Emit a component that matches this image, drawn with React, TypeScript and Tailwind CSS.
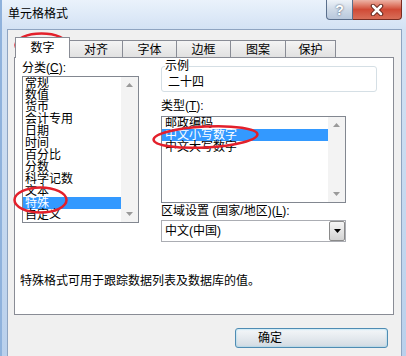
import React from 'react';

const categories = ['常规', '数值', '货币', '会计专用', '日期', '时间', '百分比', '分数', '科学记数', '文本', '特殊', '自定义'];
const types = ['邮政编码', '中文小写数字', '中文大写数字'];

const tabs = [
  { label: '对齐', w: 'w-[54px]' },
  { label: '字体', w: 'w-[55px]' },
  { label: '边框', w: 'w-[55px]' },
  { label: '图案', w: 'w-[56px]' },
  { label: '保护', w: 'w-[51px]' },
];

function ScrollTrack() {
  return (
    <div className="flex w-[17px] flex-col items-center justify-between bg-[#f3f3f3] py-[6px]">
      <svg width="7" height="4" viewBox="0 0 7 4">
        <path d="M0 4 L3.5 0 L7 4 Z" fill="#9a9a9a" />
      </svg>
      <svg width="7" height="4" viewBox="0 0 7 4">
        <path d="M0 0 L3.5 4 L7 0 Z" fill="#9a9a9a" />
      </svg>
    </div>
  );
}

function ListBox({
  items,
  selected,
  className,
  pad,
}: {
  items: string[];
  selected: string;
  className: string;
  pad: string;
}) {
  return (
    <div className={`flex border border-[#828790] bg-white ${className}`}>
      <div className="min-w-0 flex-1 overflow-hidden">
        {items.map((it) => (
          <div
            key={it}
            className={`h-[12px] whitespace-nowrap text-[12px] leading-[12px] ${pad} ${
              it === selected ? 'bg-[#3399ff] text-white' : 'text-black'
            }`}
          >
            {it}
          </div>
        ))}
      </div>
      <ScrollTrack />
    </div>
  );
}

export default function App() {
  return (
    <div className="relative h-[356px] w-[406px] overflow-hidden border-l-2 border-[#8fb2dc] bg-gradient-to-b from-[#d6e4f4] to-[#b9d0ec] font-['Liberation_Sans','Noto_Sans_CJK_SC',sans-serif] text-black">
      {/* title bar */}
      <div className="-ml-[2px] flex h-[29px] items-start bg-gradient-to-b from-[#eaf2fb] to-[#d3e2f4]">
        <div className="pl-[8px] pt-[8px] text-[12px] leading-[12px]">单元格格式</div>
        <div className="ml-auto mr-[4px] flex">
          <div className="flex h-[20px] w-[27px] items-center justify-center rounded-bl-[4px] border border-t-0 border-[#5a6f8c] bg-gradient-to-b from-[#eef3f9] via-[#cfdae7] to-[#b8c8dc] text-[14px] font-bold leading-[14px] text-white [text-shadow:0_0_2px_#2c3e57]">
            ?
          </div>
          <div className="flex h-[20px] w-[49px] items-center justify-center rounded-br-[4px] border border-l-0 border-t-0 border-[#7a2d22] bg-gradient-to-b from-[#ecb3a6] via-[#d04a36] to-[#d86e58]">
            <svg width="14" height="12" viewBox="0 0 14 12">
              <path d="M3 2 L11 10 M11 2 L3 10" stroke="#5a1f16" strokeWidth="4.5" strokeLinecap="round" />
              <path d="M3 2 L11 10 M11 2 L3 10" stroke="#ffffff" strokeWidth="2.6" strokeLinecap="round" />
            </svg>
          </div>
        </div>
      </div>

      {/* client area */}
      <div className="ml-[5px] h-[340px] w-[395px] border border-[#8ea4c1] bg-[#f0f0f0]">
        {/* tab strip */}
        <div className="flex h-[27px] items-end pl-[7px] pt-[7px]">
          <div className="relative z-10 -mb-px flex h-[21px] w-[55px] justify-center border border-b-0 border-[#898c95] bg-white pt-[4px] text-[12px] leading-[12px]">
            数字
          </div>
          {tabs.map((t) => (
            <div
              key={t.label}
              className={`-ml-px flex h-[17px] justify-center border border-b-0 border-[#898c95] bg-gradient-to-b from-[#f4f4f4] to-[#e1e1e1] pt-[3px] text-[12px] leading-[12px] ${t.w}`}
            >
              {t.label}
            </div>
          ))}
        </div>

        {/* tab panel */}
        <div className="ml-[6px] h-[258px] w-[380px] border border-[#898c95] bg-white">
          <div className="flex pl-[7px] pt-[4px]">
            <div className="w-[117px]">
              <div className="h-[12px] text-[12px] leading-[12px]">
                分类(<u>C</u>):
              </div>
              <ListBox items={categories} selected="特殊" className="mt-[2px] h-[147px] w-[117px]" pad="pl-[2px]" />
            </div>

            <div className="ml-[22px] w-[216px]">
              <fieldset className="-mt-[2px] rounded-[3px] border border-[#d5dfe5] px-[3px] pb-[3px]">
                <legend className="text-[12px] leading-[12px]">示例</legend>
                <div className="mt-[4px] pl-[3px] text-[12px] leading-[12px]">二十四</div>
              </fieldset>

              <div className="mt-[8px] h-[12px] text-[12px] leading-[12px]">
                类型(<u>T</u>):
              </div>
              <ListBox items={types} selected="中文小写数字" className="mt-[4px] h-[87px] w-[185px]" pad="pl-[3px]" />

              <div className="mt-[2px] h-[12px] whitespace-nowrap text-[12px] leading-[12px]">
                区域设置 (国家/地区)(<u>L</u>):
              </div>
              <div className="mt-[3px] flex h-[22px] w-[185px] items-center border border-[#abadb3] bg-white">
                <div className="flex-1 pl-[3px] text-[12px] leading-[12px]">中文(中国)</div>
                <div className="flex h-[20px] w-[16px] items-center justify-center rounded-[2px] border border-[#8a8a8a] bg-gradient-to-b from-[#f6f6f6] to-[#d3d3d3]">
                  <svg width="7" height="4" viewBox="0 0 7 4">
                    <path d="M0 0 L3.5 4 L7 0 Z" fill="#000000" />
                  </svg>
                </div>
              </div>
            </div>
          </div>

          <div className="mt-[33px] pl-[5px] text-[12px] leading-[12px]">特殊格式可用于跟踪数据列表及数据库的值。</div>
        </div>

        {/* buttons */}
        <div className="flex justify-end pr-[13px] pt-[13px]">
          <div className="flex h-[20px] w-[153px] items-center rounded-[3px] border border-[#4f8cb3] bg-gradient-to-b from-[#f4f7f9] via-[#e4e9ee] to-[#d3dbe2] pl-[22px] text-[12px] leading-[12px] shadow-[inset_0_0_2px_#7fd0ef]">
            确定
          </div>
        </div>
      </div>

      {/* red annotation marks */}
      <svg className="pointer-events-none absolute -left-[2px] top-0" width="406" height="356" viewBox="0 0 406 356">
        <ellipse cx="41.5" cy="45" rx="26" ry="11.5" fill="none" stroke="#e3202b" strokeWidth="2.5" />
        <ellipse cx="40.5" cy="200" rx="26" ry="12.5" fill="none" stroke="#e3202b" strokeWidth="2.5" />
        <ellipse cx="205.5" cy="137" rx="52" ry="10.5" fill="none" stroke="#e3202b" strokeWidth="2.5" transform="rotate(-3 205.5 137)" />
      </svg>
    </div>
  );
}
